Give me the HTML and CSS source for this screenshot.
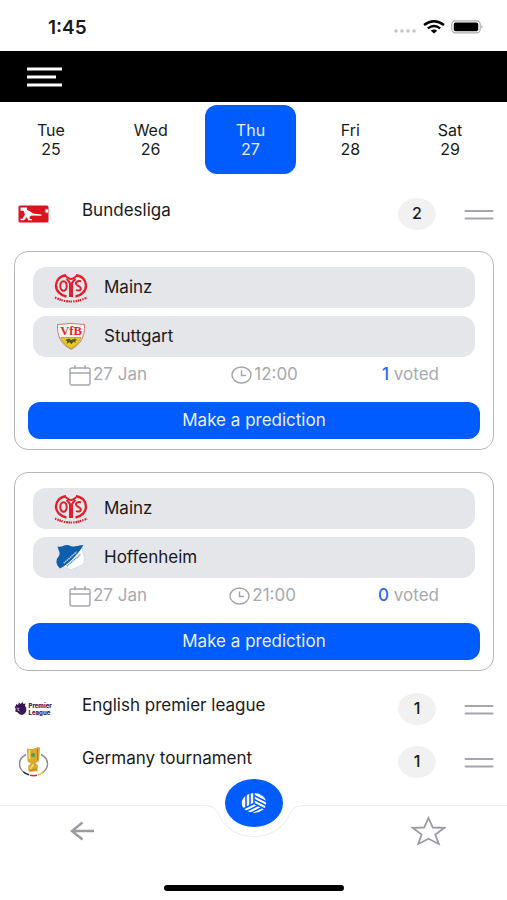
FILE: index.html
```html
<!DOCTYPE html>
<html lang="en">
<head>
<meta charset="utf-8">
<meta name="viewport" content="width=device-width, initial-scale=1">
<title>Predictions</title>
<link rel="stylesheet" href="styles.css">
</head>
<body>
<svg class="sprite" aria-hidden="true">
  <symbol id="mainz" viewBox="0 0 34 30">
    <g fill="none" stroke="#e0202b">
      <path d="M12 2.200C5.500 3 2 7.600 2 12.500c0 5.300 4.400 10 10.500 11" stroke-width="2.400"/>
      <path d="M22 2.200C28.500 3 32 7.600 32 12.500c0 5.300-4.400 10-10.500 11" stroke-width="2.400"/>
      <path d="M10.500 2C13 4.500 15 6 17 6s4-1.500 6.500-4" stroke-width="1.800"/>
      <path d="M12.500 6c2.500 2 4.500 4.500 4.500 8 0-3.500 2-6 4.500-8" stroke-width="2.200"/>
      <path d="M17 11v13" stroke-width="4"/>
      <ellipse cx="9.500" cy="13" rx="3.200" ry="4.800" stroke-width="2"/>
      <path d="M27 8.300c-3.500-.8-5.300.6-5 2.300.4 2.300 5.200 2.400 4.800 5.200-.3 1.900-2.900 2.300-4.800 1.200" stroke-width="2"/>
      <path d="M1 24.500Q17 32.500 33 24.500" stroke-width="2.200" stroke-dasharray="1.400 1 1.800 .5 1.500 .5 1.500 1.200"/>
    </g>
  </symbol>
  <symbol id="hoffenheim" viewBox="0 0 30 26">
    <path d="M26.500 3.500c-2 5 2.500 8 1.500 13-1 5-8 5.500-13 8.500-3-1.500-6-2.200-9.500-4z" fill="#fff" stroke="#c3d3e4" stroke-width=".6"/>
    <path d="M2 2.500C6 3.500 7.500 1 11 1c3 0 3 1.500 6 1.500 4 0 6-1.500 10-1.500C24 6 21 10 17 14 13 18 9 21.500 4.500 23.500 2.500 21.500 1 20 1 17c0-4 3-4.500 3-8 0-2.500-1.800-4-2-6.500z" fill="#0d5fae"/>
    <path d="M8 18.500 20.500 7.500" stroke="#b5d0ea" stroke-width="1.400" stroke-dasharray="1.500 .5"/>
    <path d="M11 21.500 24 10" stroke="#4c83bb" stroke-width="1.200" stroke-dasharray="1.200 .6"/>
  </symbol>
  <symbol id="calendar" viewBox="0 0 22 21">
    <path d="M1 5q0-2 2-2h16q2 0 2 2v13q0 2-2 2H3q-2 0-2-2zM1 8h20M6 0v4M16 0v4" fill="none" stroke="#a3a6ad" stroke-width="1.400"/>
  </symbol>
  <symbol id="clock" viewBox="0 0 21 18">
    <ellipse cx="10.500" cy="9" rx="9.500" ry="8" fill="none" stroke="#a3a6ad" stroke-width="1.400"/>
    <path d="M10.500 4.500v5H15" fill="none" stroke="#a3a6ad" stroke-width="1.400"/>
  </symbol>
  <symbol id="handle" viewBox="0 0 30 12">
    <path d="M1.500 2h27M1.500 9.500h27" stroke="#a4a5b0" stroke-width="2" stroke-linecap="round"/>
  </symbol>
</svg>

<header>
  <div class="status">
    <time class="clock">1:45</time>
    <div class="signals" aria-hidden="true">
      <svg class="dots" viewBox="0 0 24 4"><g fill="#c4c4c4"><circle cx="3" cy="2" r="1.800"/><circle cx="9" cy="2" r="1.800"/><circle cx="15" cy="2" r="1.800"/><circle cx="21" cy="2" r="1.800"/></g></svg>
      <svg class="wifi" viewBox="0 0 22 14"><g fill="none" stroke="#000" stroke-width="2.300"><path d="M1 5q10-7.600 20 0"/><path d="M4.800 8.400q6.200-4.800 12.400 0"/></g><path d="M7.800 10.700q3.200-2.400 6.400 0L11 13.500z"/></svg>
      <svg class="battery" viewBox="0 0 33 14"><rect x=".8" y=".8" width="28.400" height="12" rx="3.600" fill="#fff" stroke="#adadad" stroke-width="1.200"/><rect x="2.800" y="2.600" width="24.400" height="8.600" rx="1.800"/><path d="M30.500 5q2 1.800 0 3.600z" fill="#8b8b8b"/></svg>
    </div>
  </div>
  <div class="topbar">
    <button class="plain" aria-label="Menu">
      <svg class="menu-icon" viewBox="0 0 35 20"><path d="M0 2h35M0 10h29M0 18h35" stroke="#fff" stroke-width="3"/></svg>
    </button>
  </div>
</header>

<main>
  <div class="days">
    <button class="day"><span>Tue</span><span>25</span></button>
    <button class="day"><span>Wed</span><span>26</span></button>
    <button class="day selected" aria-pressed="true"><span>Thu</span><span>27</span></button>
    <button class="day"><span>Fri</span><span>28</span></button>
    <button class="day"><span>Sat</span><span>29</span></button>
  </div>

  <section>
    <div class="league">
      <svg class="league-logo" viewBox="0 0 40 32" aria-hidden="true">
        <rect x="4.500" y="7.500" width="30" height="17" rx="1.500" fill="#d8141f"/>
        <path d="M6.500 9.500h6.500v2.500l2.500 1 3.500 2.500 8.500 1v1.300l-10-.2-2 1.200.3 2.200H18v1.300h-4l-1-3.300-3 3.300H6.500v-1.500h2l2.500-4.500-1.500-3.500H6.500z" fill="#fff"/>
        <circle cx="33" cy="13" r="2" fill="#fff" stroke="#bc8285" stroke-width=".9"/>
      </svg>
      <h2 class="league-name">Bundesliga</h2>
      <span class="count">2</span>
      <button class="plain" aria-label="Toggle Bundesliga"><svg class="handle"><use href="#handle"/></svg></button>
    </div>

    <div class="matches">
      <article class="match">
        <div class="team"><svg class="crest" aria-hidden="true"><use href="#mainz"/></svg><span>Mainz</span></div>
        <div class="team">
          <svg class="crest small" viewBox="0 0 30 28" aria-hidden="true">
            <path d="M1 1.500Q15-.5 29 1.500C29.500 13 26 22 15 27.300 4 22 .5 13 1 1.500z" fill="#fdf5f2" stroke="#d5534c" stroke-width=".8"/>
            <path d="M4.500 15h21c-1.800 5-5 8.800-10.500 11.500C9.500 23.800 6.300 20 4.500 15z" fill="#e2cc22" stroke="#8d8220" stroke-width=".6"/>
            <path d="M9 17.500l4-1.500 2 1.500 4-1.500 2.500 1.500-2 1 .5 2-2.500-1-2 2.500-2-2-3 1.500.5-2.500z" fill="#5c5614"/>
            <text class="crest-vfb" x="15" y="12.500">VfB</text>
          </svg>
          <span>Stuttgart</span>
        </div>
        <div class="meta">
          <span class="fact"><svg class="calendar" aria-hidden="true"><use href="#calendar"/></svg><span>27 Jan</span></span>
          <span class="fact"><svg class="clock-icon" aria-hidden="true"><use href="#clock"/></svg><span>12:00</span></span>
          <span class="votes"><b>1</b> voted</span>
        </div>
        <button class="predict">Make a prediction</button>
      </article>

      <article class="match">
        <div class="team"><svg class="crest" aria-hidden="true"><use href="#mainz"/></svg><span>Mainz</span></div>
        <div class="team"><svg class="crest small" aria-hidden="true"><use href="#hoffenheim"/></svg><span>Hoffenheim</span></div>
        <div class="meta">
          <span class="fact"><svg class="calendar" aria-hidden="true"><use href="#calendar"/></svg><span>27 Jan</span></span>
          <span class="fact"><svg class="clock-icon" aria-hidden="true"><use href="#clock"/></svg><span>21:00</span></span>
          <span class="votes"><b>0</b> voted</span>
        </div>
        <button class="predict">Make a prediction</button>
      </article>
    </div>
  </section>

  <section class="league">
    <svg class="league-logo" viewBox="0 0 40 32" aria-hidden="true">
      <path d="M2 11l2 1 1-2.500 1.800 1.500 1.700-2 1 2 2-.5-.5 2.200q2 2 1.300 5-.6 3.300-3.800 4.300l-3-.7-2-2-2.300-.8.500-2.500-1-2 1.300-1.500z" fill="#3a1555"/>
      <path d="M2.500 15l2.500.5-1.500 1.500 2 1" stroke="#e8dff0" stroke-width=".7" fill="none"/>
      <text class="pl-text" x="14.500" y="15">Premier</text>
      <text class="pl-text" x="14.500" y="21.500">League</text>
    </svg>
    <h2 class="league-name">English premier league</h2>
    <span class="count">1</span>
    <button class="plain" aria-label="Toggle English premier league"><svg class="handle"><use href="#handle"/></svg></button>
  </section>

  <section class="league">
    <svg class="league-logo" viewBox="0 0 40 32" aria-hidden="true">
      <g fill="none" stroke-width="1.400">
        <path d="M12 8.500C7 11 5.500 14.500 5.500 18c0 4 2.500 7 5.500 9" stroke="#8b8b8b"/>
        <path d="M27 8.500c5 2.500 6.500 6 6.500 9.500 0 4-2.500 7-5.500 9" stroke="#8b8b8b"/>
        <path d="M9.500 26q2 2 5.500 2.700" stroke="#222"/>
        <path d="M16 29.300q3.500.8 7 0" stroke="#d92a2a"/>
        <path d="M24 28.800q3.500-.8 6-3.300" stroke="#e6b52c"/>
      </g>
      <path d="M13 2.500l5 .8L24.500 1l1.500.8L25 15l-3.500 2 .5 1 2 1-.5 6.500h-9l-.5-5.500 3-2.500-3.500-2z" fill="#dca72f"/>
      <path d="M15.500 4v9M19.500 18.500l-3 4" stroke="#f9df83" stroke-width="1.600"/>
      <path d="M23.500 3v11M15.500 25l7-2" stroke="#a87a1c" stroke-width="1"/>
      <circle cx="19" cy="9" r="2.100" fill="#4a9a55"/>
    </svg>
    <h2 class="league-name">Germany tournament</h2>
    <span class="count">1</span>
    <button class="plain" aria-label="Toggle Germany tournament"><svg class="handle"><use href="#handle"/></svg></button>
  </section>
</main>

<nav class="tabbar" aria-label="Main">
  <div class="edge" aria-hidden="true">
    <span class="line"></span>
    <svg class="notch" viewBox="0 0 110 34"><path d="M0 1.500h3C20 1.500 17 9 24 18c8 10 19 14.500 31 14.500S78 28 86 18c7-9 4-16.500 21-16.500h3" fill="none" stroke="#ececee" stroke-width="1"/></svg>
    <span class="line"></span>
  </div>
  <button class="ball" aria-label="Matches">
    <svg viewBox="0 0 26 22">
      <ellipse cx="13" cy="11" rx="12.200" ry="10" fill="#fff"/>
      <g fill="none" stroke="#005cff" stroke-width="1.500">
        <path d="M13 0v11.500L0 18M13 11.500 26 18"/>
        <path d="M9 0v13.500M5 0v15.500"/>
        <path d="M13 3.500 26 10M13 7.500 26 14"/>
        <path d="M17 13.500 3 20.500M21 15.500 8 22"/>
      </g>
    </svg>
  </button>
  <div class="actions">
    <button class="plain" aria-label="Back"><svg class="back" viewBox="0 0 25 20"><path d="M12.500 1.500 2 10l10.500 8.500M2 10h22" fill="none" stroke="#9b9ca3" stroke-width="2.400"/></svg></button>
    <button class="plain" aria-label="Favourites"><svg class="star" viewBox="0 0 35 30"><path d="M17.500 2l4.300 9.500 11.700.3-9.200 6.700L27.800 28l-10.300-5.300L7.200 28l3.500-9.500-9.200-6.700 11.700-.3z" fill="none" stroke="#9b9ca3" stroke-width="1.800"/></svg></button>
  </div>
  <span class="home" aria-hidden="true"></span>
</nav>
</body>
</html>
```
FILE: styles.css
```css
* {
  box-sizing: border-box;
}

body {
  margin: 0;
  min-height: 100vh;
  display: flex;
  flex-direction: column;
  background: #fff;
  color: #1a1a1c;
  font: 16px/19px Inter, "Liberation Sans", sans-serif;
}

button {
  font: inherit;
  color: inherit;
  border: 0;
  cursor: pointer;
}

svg {
  display: block;
}

.sprite {
  position: absolute;
  width: 0;
  height: 0;
}

.plain {
  padding: 0;
  background: none;
}

/* Status and top bars */
.status {
  height: 51px;
  padding: 3px 23px 0 48px;
  display: flex;
  align-items: center;
  justify-content: space-between;
}

.clock {
  font-size: 19px;
  font-weight: 600;
}

.signals {
  display: flex;
  align-items: center;
  gap: 6px;
}

.dots {
  width: 24px;
  height: 4px;
  margin-top: 8px;
}

.wifi {
  width: 22px;
  height: 14px;
}

.battery {
  width: 33px;
  height: 14px;
}

.topbar {
  height: 51px;
  padding: 0 27px;
  display: flex;
  align-items: center;
  background: #000;
}

.menu-icon {
  width: 35px;
  height: 20px;
}

/* Day picker */
main {
  flex: 1;
}

.days {
  display: grid;
  grid-template-columns: repeat(5, 1fr);
  gap: 8px;
  padding: 3px 11px 13px 5px;
}

.day {
  height: 69px;
  padding: 0;
  display: flex;
  flex-direction: column;
  align-items: center;
  justify-content: center;
  border-radius: 12px;
  background: none;
}

.selected {
  background: #005cff;
  color: #e4edff;
}

/* Leagues */
.league {
  height: 53px;
  padding: 0 13px 0 14px;
  display: grid;
  grid-template-columns: 40px 1fr 38px 30px;
  column-gap: 28px;
  align-items: center;
}

.league-logo {
  width: 40px;
  height: 32px;
}

.league-name {
  margin: 0 0 7px;
  font-size: 17px;
  font-weight: 400;
}

.count {
  height: 32px;
  display: grid;
  place-items: center;
  border-radius: 50%;
  background: #f1f1f1;
  font-weight: 500;
}

.handle {
  width: 30px;
  height: 12px;
  margin-top: 3px;
}

/* Matches */
.matches {
  padding: 11px 13px 11px 14px;
  display: grid;
  gap: 22px;
}

.match {
  padding: 15px 13px 10px;
  border: 1px solid #b4b6bb;
  border-radius: 14px;
}

.team {
  height: 41px;
  margin: 0 5px 8px;
  padding-left: 20px;
  display: flex;
  align-items: center;
  gap: 15px;
  border-radius: 13px;
  background: #e4e6ea;
  font-size: 17px;
}

.crest {
  width: 36px;
  height: 30px;
}

.small {
  height: 27px;
}

.meta {
  height: 37px;
  padding: 0 41px;
  display: flex;
  justify-content: space-between;
  color: #a7a9af;
  font-size: 17px;
}

.fact {
  display: flex;
  align-items: flex-start;
  gap: 2px;
}

.calendar {
  width: 22px;
  height: 21px;
}

.clock-icon {
  width: 21px;
  height: 18px;
  margin-top: 1px;
}

.votes b {
  color: #2a6af5;
  font-weight: 500;
}

.predict {
  width: 100%;
  height: 37px;
  border-radius: 12px;
  background: #005cff;
  color: #e8f0ff;
  font-size: 17px;
}

/* Text inside emblems */
.crest-vfb {
  fill: #d82a26;
  font: 700 13px "Liberation Serif", serif;
  text-anchor: middle;
}

.pl-text {
  fill: #3a1555;
  font-size: 6px;
  font-weight: 800;
}

/* Bottom bar */
.tabbar {
  position: relative;
  height: 96px;
  display: flex;
  flex-direction: column;
  align-items: center;
}

.edge {
  position: absolute;
  inset: 0 0 auto;
  display: flex;
}

.line {
  flex: 1;
  height: 2px;
  border-bottom: 1px solid #ececee;
}

.notch {
  width: 110px;
  height: 34px;
}

.ball {
  position: absolute;
  top: -25px;
  width: 58px;
  height: 48px;
  padding: 0;
  display: grid;
  place-items: center;
  border-radius: 50%;
  background: #005cff;
}

.ball svg {
  width: 26px;
  height: 22px;
}

.actions {
  width: 100%;
  height: 54px;
  padding: 0 61px 0 70px;
  display: flex;
  align-items: center;
  justify-content: space-between;
}

.back {
  width: 25px;
  height: 20px;
}

.star {
  width: 35px;
  height: 30px;
}

.home {
  width: 180px;
  height: 6px;
  margin-top: 27px;
  border-radius: 3px;
  background: #000;
}
```
